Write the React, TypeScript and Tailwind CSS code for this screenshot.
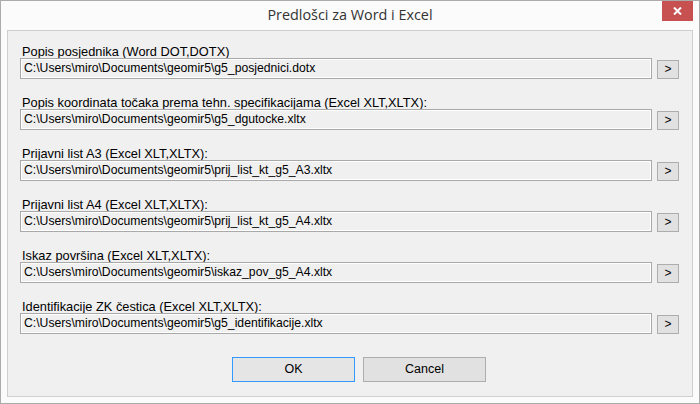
const rows = [
  {
    label: 'Popis posjednika (Word DOT,DOTX)',
    path: 'C:\\Users\\miro\\Documents\\geomir5\\g5_posjednici.dotx',
  },
  {
    label: 'Popis koordinata točaka prema tehn. specifikacijama (Excel XLT,XLTX):',
    path: 'C:\\Users\\miro\\Documents\\geomir5\\g5_dgutocke.xltx',
  },
  {
    label: 'Prijavni list A3 (Excel XLT,XLTX):',
    path: 'C:\\Users\\miro\\Documents\\geomir5\\prij_list_kt_g5_A3.xltx',
  },
  {
    label: 'Prijavni list A4 (Excel XLT,XLTX):',
    path: 'C:\\Users\\miro\\Documents\\geomir5\\prij_list_kt_g5_A4.xltx',
  },
  {
    label: 'Iskaz površina (Excel XLT,XLTX):',
    path: 'C:\\Users\\miro\\Documents\\geomir5\\iskaz_pov_g5_A4.xltx',
  },
  {
    label: 'Identifikacije ZK čestica (Excel XLT,XLTX):',
    path: 'C:\\Users\\miro\\Documents\\geomir5\\g5_identifikacije.xltx',
  },
];

function TemplateRow({ label, path }: { label: string; path: string }) {
  return (
    <div className="flex flex-col">
      <div className="h-[13px] pl-[14px] text-[12.8px] leading-[13px] text-black whitespace-nowrap">
        {label}
      </div>
      <div className="flex items-center pl-[12px]">
        <div className="flex h-[21px] w-[632px] items-center border border-[#a9a9a9] bg-[#f0f0f0] pl-[3px] text-[12.2px] text-black shadow-[inset_0_0_0_1px_#ffffff] whitespace-nowrap">
          {path}
        </div>
        <button className="ml-[5px] mt-[1px] flex h-[19px] w-[22px] items-center justify-center border border-[#adadad] bg-[#e1e1e1] text-[12px] leading-none text-black">
          &gt;
        </button>
      </div>
    </div>
  );
}

export default function App() {
  return (
    <div
      className="flex h-[404px] w-[700px] flex-col border border-[#ababab] bg-[#fbfbfb]"
      style={{ fontFamily: '"Liberation Sans", Arial, sans-serif' }}
    >
      {/* Title bar */}
      <div className="grid h-[29px] grid-cols-[1fr_auto_1fr]">
        <div />
        <div
          className="pt-[4px] text-[14.4px] leading-[20px] text-[#333333]"
          style={{ fontFamily: '"Open Sans", "Noto Sans", sans-serif' }}
        >
          Predlošci za Word i Excel
        </div>
        <div className="flex justify-end pr-[6px]">
          <button className="flex h-[20px] w-[31px] items-center justify-center bg-[#c75050]">
            <svg width="9" height="8" viewBox="0 0 9 8">
              <path d="M1 0.5 L8 7.5 M8 0.5 L1 7.5" stroke="#ffffff" strokeWidth="2" />
            </svg>
          </button>
        </div>
      </div>

      {/* Client area */}
      <div className="mx-[6px] flex flex-1 flex-col border border-[#cfcfcf] bg-[#f0f0f0] pt-[14px]">
        <div className="flex flex-col gap-[17px]">
          {rows.map((r) => (
            <TemplateRow key={r.label} label={r.label} path={r.path} />
          ))}
        </div>

        <div className="mt-[23px] flex gap-[8px] pl-[224px]">
          <button className="h-[25px] w-[123px] border border-[#3399ff] bg-[#e5e5e5] text-[12.5px] text-black">
            OK
          </button>
          <button className="h-[25px] w-[123px] border border-[#adadad] bg-[#e1e1e1] text-[12.5px] text-black">
            Cancel
          </button>
        </div>
      </div>
      <div className="h-[6px]" />
    </div>
  );
}
